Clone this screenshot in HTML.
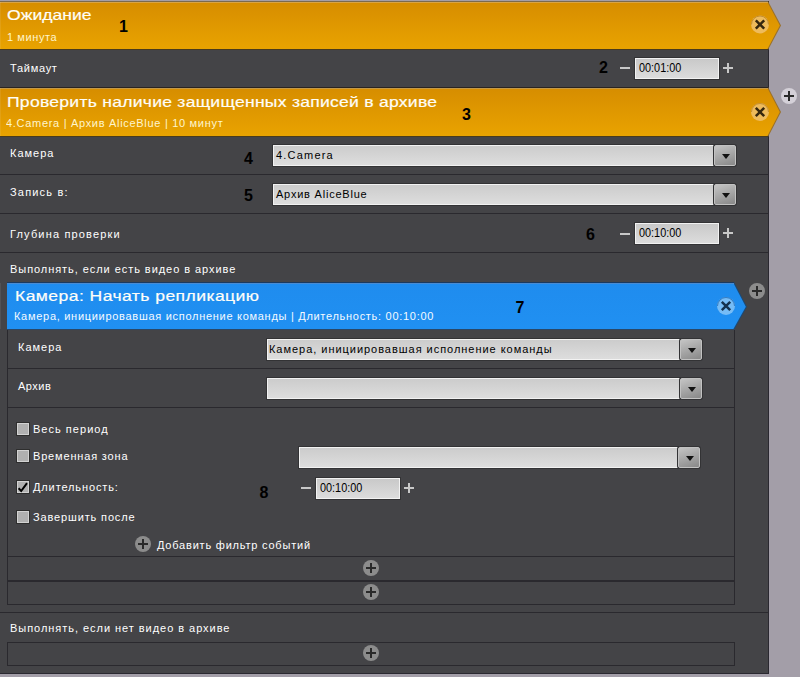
<!DOCTYPE html><html><head><meta charset="utf-8"><style>
*{margin:0;padding:0;box-sizing:border-box}
html,body{width:800px;height:677px;overflow:hidden;background:#a39ea8;font-family:"Liberation Sans",sans-serif}
.a{position:absolute}
.ttl{position:absolute;color:#fffef6;font-size:15px;white-space:nowrap;letter-spacing:0px;line-height:18px;transform:scaleX(1.17);transform-origin:0 0;-webkit-text-stroke:0.2px #fff}
.sub{position:absolute;color:#fff5cc;font-size:10px;white-space:nowrap;letter-spacing:0.1px;line-height:12px;transform:scaleX(1.1);transform-origin:0 0}
.lbl{position:absolute;color:#fff;font-size:11px;white-space:nowrap;letter-spacing:0px;line-height:13px}
.num{position:absolute;color:#000;font-size:16px;font-weight:bold;line-height:18px}
.line{position:absolute;height:1px;background:#2a292e}
.inp{position:absolute;height:21px;border:1px solid #f2f2f2;background:linear-gradient(#c9c9c9,#dcdcdc);box-shadow:0 0 0 1px #333335}
.inp span{position:absolute;left:3px;top:2px;font-size:12.5px;color:#000;white-space:nowrap;line-height:14px;transform:scaleX(0.87);transform-origin:0 0}
.dd{position:absolute;height:21px;border:1px solid #f2f2f2;background:linear-gradient(#cccccc,#dddddd);box-shadow:0 0 0 1px #333335}
.dd span{position:absolute;left:2px;top:3px;font-size:11px;color:#000;white-space:nowrap;letter-spacing:0px;line-height:13px}
.ddb{position:absolute;height:21px;width:22px;border-radius:2px;background:linear-gradient(160deg,#c4c4c4,#888888);border:1px solid #c2c2c2;box-shadow:0 0 0 1px #333335}
.ddb:after{content:"";position:absolute;left:7px;top:8px;border-left:4px solid transparent;border-right:4px solid transparent;border-top:5px solid #111}
.minus{position:absolute;width:10px;height:2px;background:#c8c8c8}
.plus{position:absolute;width:10px;height:10px}
.plus:before{content:"";position:absolute;left:0;top:4px;width:10px;height:2px;background:#c8c8c8}
.plus:after{content:"";position:absolute;left:4px;top:0;width:2px;height:10px;background:#c8c8c8}
.box{position:absolute;border:1px solid #2a292e}
.cb{position:absolute;width:14px;height:14px;background:#b0b0b0;border:1px solid #2e2e2e;box-shadow:inset 0 0 0 1px #d2d2d2}
.pc{position:absolute;width:16px;height:16px;border-radius:50%;background:#8c8c8c}
.pc:before{content:"";position:absolute;left:3px;top:7px;width:10px;height:2px;background:#2a2a2a}
.pc:after{content:"";position:absolute;left:7px;top:3px;width:2px;height:10px;background:#2a2a2a}
</style></head><body>
<div class="a" style="left:0;top:1px;width:769px;height:673px;background:#444447;border-right:1px solid #2a2830;border-bottom:1px solid #2a2830"></div>
<svg class="a" style="left:0;top:1px" width="800" height="49">
 <defs><linearGradient id="og1" x1="0" y1="0" x2="0" y2="1"><stop offset="0" stop-color="#d68d00"/><stop offset="1" stop-color="#e9a300"/></linearGradient></defs>
 <polygon points="0,0 768,0 781,24.5 768,49 0,49" fill="#9a7028"/>
 <polygon points="0,1 767.4,1 779.8,24.5 767.4,48 0,48" fill="url(#og1)"/>
 <rect x="0" y="0" width="768" height="1" fill="#7c6a4c"/>
 <rect x="0" y="1" width="768" height="1" fill="#d9a446"/>
 <rect x="0" y="48" width="768" height="1" fill="#4a3a1c"/>
 <circle cx="760" cy="23.5" r="9" fill="#eebb5c"/>
 <path d="M751.5 23.5 A8.5 8.5 0 0 1 768.5 23.5" stroke="#b07a20" stroke-width="1" fill="none" opacity="0.7"/>
 <path d="M755.8 19.3 L764.2 27.7 M764.2 19.3 L755.8 27.7" stroke="#35270e" stroke-width="2.5"/>
 <rect x="0" y="1" width="1" height="47" fill="#fff" fill-opacity="0.08"/>
</svg>
<div class="ttl" style="left:7px;top:6px;letter-spacing:0px">Ожидание</div>
<div class="sub" style="left:7px;top:32px;letter-spacing:0.532px">1 минута</div>
<div class="num" style="left:119px;top:18px">1</div>
<div class="lbl" style="left:10px;top:62px;letter-spacing:0.717px">Таймаут</div>
<div class="num" style="left:599px;top:59px">2</div>
<div class="minus" style="left:620px;top:67px"></div>
<div class="inp" style="left:635px;top:58px;width:84px"><span>00:01:00</span></div>
<div class="plus" style="left:723px;top:63px"></div>
<svg class="a" style="left:0;top:87px" width="800" height="50">
 <defs><linearGradient id="og2" x1="0" y1="0" x2="0" y2="1"><stop offset="0" stop-color="#d68d00"/><stop offset="1" stop-color="#e9a300"/></linearGradient></defs>
 <polygon points="0,0 768,0 781,25.0 768,50 0,50" fill="#9a7028"/>
 <polygon points="0,1 767.4,1 779.8,25.0 767.4,49 0,49" fill="url(#og2)"/>
 <rect x="0" y="0" width="768" height="1" fill="#2a2420"/>
 <rect x="0" y="1" width="768" height="1" fill="#c49a48"/>
 <rect x="0" y="49" width="768" height="1" fill="#4a3c1c"/>
 <circle cx="760" cy="25.0" r="9" fill="#eebb5c"/>
 <path d="M751.5 25.0 A8.5 8.5 0 0 1 768.5 25.0" stroke="#b07a20" stroke-width="1" fill="none" opacity="0.7"/>
 <path d="M755.8 20.8 L764.2 29.2 M764.2 20.8 L755.8 29.2" stroke="#35270e" stroke-width="2.5"/>
 <rect x="0" y="1" width="1" height="48" fill="#fff" fill-opacity="0.08"/>
</svg>
<div class="ttl" style="left:7px;top:93px;letter-spacing:0.22px">Проверить наличие защищенных записей в архиве</div>
<div class="sub" style="left:6px;top:117.5px;letter-spacing:0.634px">4.Camera | Архив AliceBlue | 10 минут</div>
<div class="num" style="left:462px;top:106px">3</div>
<div class="pc" style="left:781px;top:88px;background:#d4d0d8"></div>
<div class="lbl" style="left:10px;top:147px;letter-spacing:1.0px">Камера</div>
<div class="num" style="left:244px;top:150px">4</div>
<div class="dd" style="left:273px;top:145px;width:441px"><span style="letter-spacing:1.2px">4.Camera</span></div>
<div class="ddb" style="left:714px;top:145px"></div>
<div class="line" style="left:0;top:174px;width:769px"></div>
<div class="lbl" style="left:10px;top:186px;letter-spacing:1.188px">Запись в:</div>
<div class="num" style="left:244px;top:187px">5</div>
<div class="dd" style="left:273px;top:184px;width:441px"><span style="letter-spacing:0.786px">Архив AliceBlue</span></div>
<div class="ddb" style="left:714px;top:184px"></div>
<div class="line" style="left:0;top:213px;width:769px"></div>
<div class="lbl" style="left:10px;top:228px;letter-spacing:1.167px">Глубина проверки</div>
<div class="num" style="left:586px;top:226px">6</div>
<div class="minus" style="left:620px;top:233px"></div>
<div class="inp" style="left:635px;top:223px;width:84px"><span>00:10:00</span></div>
<div class="plus" style="left:723px;top:228px"></div>
<div class="line" style="left:0;top:252px;width:769px"></div>
<div class="lbl" style="left:10px;top:262.5px;letter-spacing:0.941px">Выполнять, если есть видео в архиве</div>
<svg class="a" style="left:0;top:282px" width="800" height="48">
 <defs><linearGradient id="bg1" x1="0" y1="0" x2="0" y2="1"><stop offset="0" stop-color="#1f8cee"/><stop offset="1" stop-color="#2090f2"/></linearGradient></defs>
 <polygon points="7,0 734,0 747,24.8 734,48 7,48" fill="#1a4a78"/>
 <polygon points="7,1 733.4,1 745.8,24.8 733.4,47 7,47" fill="url(#bg1)"/>
 <rect x="7" y="0" width="727" height="1" fill="#1a3a60"/>
 <rect x="7" y="1" width="727" height="1" fill="#4a8ad0"/>
 <rect x="7" y="47" width="727" height="1" fill="#2a4868"/>
 <circle cx="726" cy="24.0" r="9" fill="#76bcf6"/>
 <path d="M717.5 24.0 A8.5 8.5 0 0 1 734.5 24.0" stroke="#1a60a8" stroke-width="1" fill="none" opacity="0.7"/>
 <path d="M721.8 19.8 L730.2 28.2 M730.2 19.8 L721.8 28.2" stroke="#14324f" stroke-width="2.5"/>
 <rect x="0" y="1" width="1" height="46" fill="#fff" fill-opacity="0.08"/>
</svg>
<div class="ttl" style="left:15px;top:287px;letter-spacing:0.37px">Камера: Начать репликацию</div>
<div class="sub" style="color:#f4faff;left:14px;top:311px;letter-spacing:0.646px">Камера, инициировавшая исполнение команды | Длительность: 00:10:00</div>
<div class="num" style="left:515.5px;top:299px">7</div>
<div class="pc" style="left:749px;top:283px"></div>
<div class="box" style="left:7px;top:330px;width:728px;height:275px;border-top:none"></div>
<div class="lbl" style="left:18px;top:341px;letter-spacing:1.0px">Камера</div>
<div class="dd" style="left:267px;top:339px;width:413px"><span style="left:1px;letter-spacing:0.965px">Камера, инициировавшая исполнение команды</span></div>
<div class="ddb" style="left:680px;top:339px"></div>
<div class="line" style="left:8px;top:368px;width:726px"></div>
<div class="lbl" style="left:18px;top:380px;letter-spacing:0.5px">Архив</div>
<div class="dd" style="left:267px;top:378px;width:413px"></div>
<div class="ddb" style="left:680px;top:378px"></div>
<div class="line" style="left:8px;top:407px;width:726px"></div>
<div class="cb" style="left:16px;top:422px"></div>
<div class="lbl" style="left:33px;top:423px;letter-spacing:1.025px">Весь период</div>
<div class="cb" style="left:16px;top:449px"></div>
<div class="lbl" style="left:33px;top:450px;letter-spacing:0.827px">Временная зона</div>
<div class="dd" style="left:299px;top:447px;width:379px"></div>
<div class="ddb" style="left:678px;top:447px"></div>
<div class="cb" style="left:16px;top:480px"></div>
<svg class="a" style="left:16px;top:480px" width="14" height="14"><path d="M2.6 8.2 L5.2 11 L11 3.2" stroke="#000" stroke-width="2" fill="none"/></svg>
<div class="lbl" style="left:33px;top:480.5px;letter-spacing:0.875px">Длительность:</div>
<div class="num" style="left:259.5px;top:483.5px">8</div>
<div class="minus" style="left:301px;top:487px"></div>
<div class="inp" style="left:316px;top:478px;width:84px"><span>00:10:00</span></div>
<div class="plus" style="left:404px;top:483px"></div>
<div class="cb" style="left:16px;top:510px"></div>
<div class="lbl" style="left:33px;top:510.5px;letter-spacing:0.857px">Завершить после</div>
<div class="pc" style="left:135px;top:536px"></div>
<div class="lbl" style="left:157px;top:539px;letter-spacing:0.791px">Добавить фильтр событий</div>
<div class="line" style="left:8px;top:556px;width:726px"></div>
<div class="pc" style="left:363px;top:560px"></div>
<div class="line" style="left:8px;top:580px;width:726px;height:2px"></div>
<div class="pc" style="left:363px;top:584px"></div>
<div class="line" style="left:0;top:612px;width:769px"></div>
<div class="lbl" style="left:10px;top:622px;letter-spacing:0.961px">Выполнять, если нет видео в архиве</div>
<div class="box" style="left:7px;top:642px;width:728px;height:24px"></div>
<div class="pc" style="left:363px;top:645px"></div>
</body></html>
